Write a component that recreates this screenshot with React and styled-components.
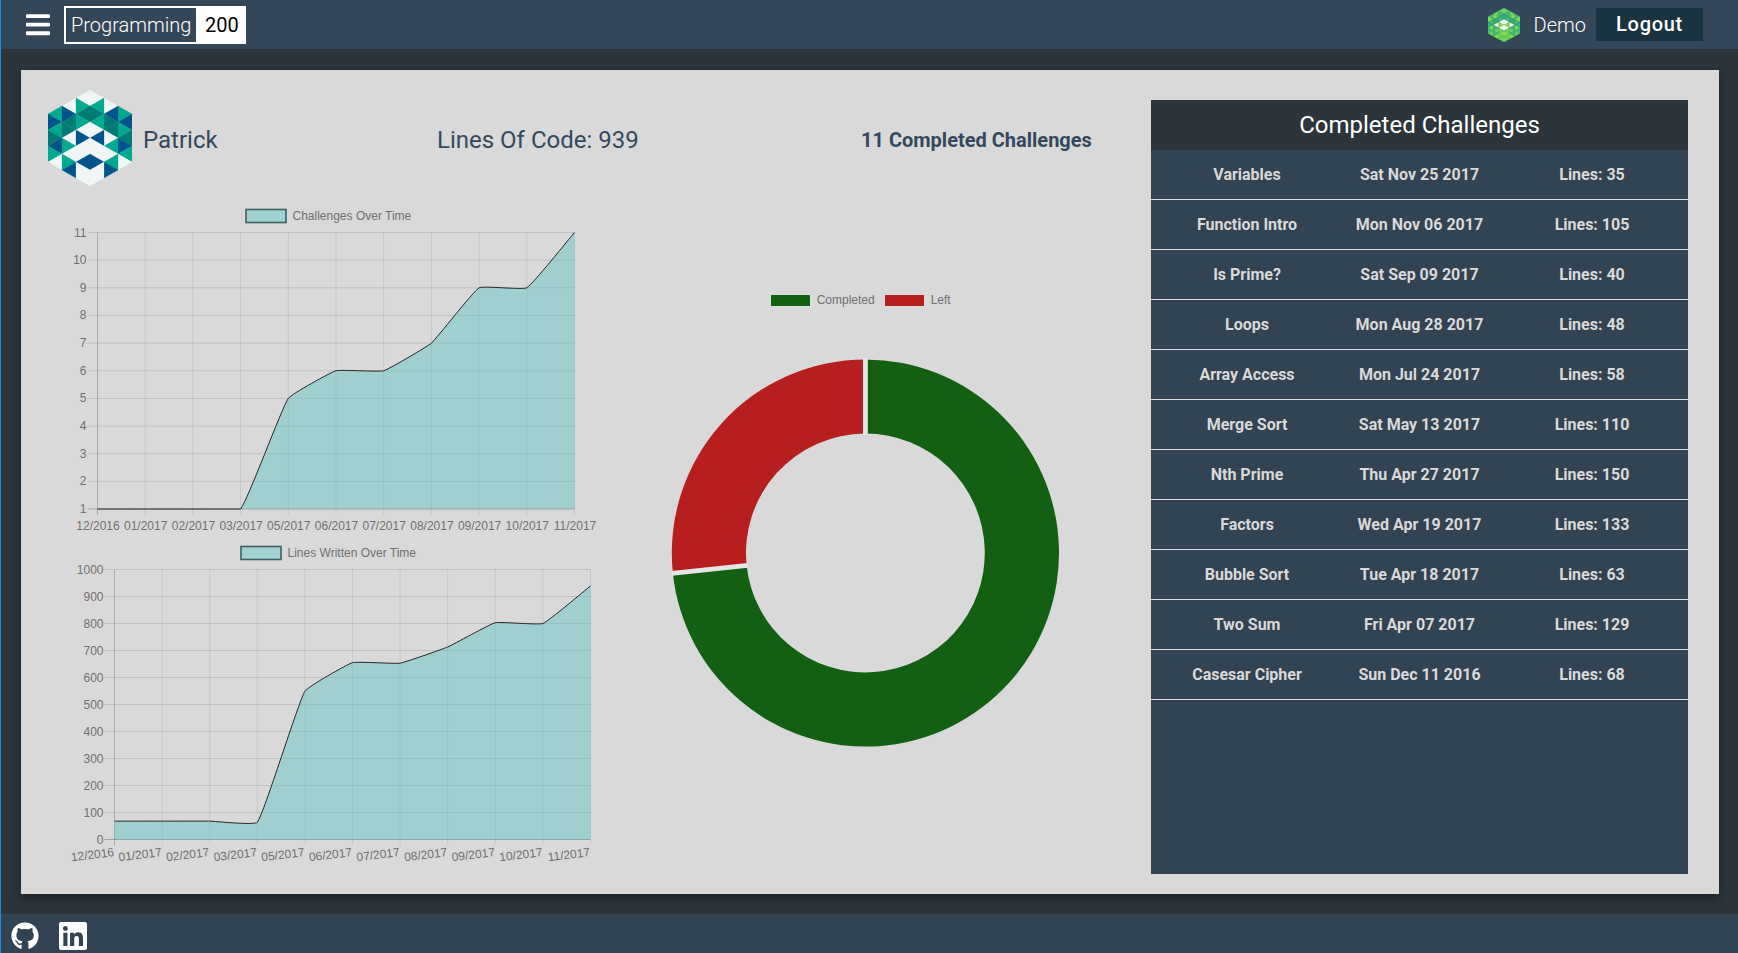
import React from "react";
import styled, { createGlobalStyle } from "styled-components";
import { FaBars, FaGithub, FaLinkedin } from "react-icons/fa";

const Global = createGlobalStyle`
  html, body { margin: 0; padding: 0; height: 100%; }
  body { font-family: Roboto, "Liberation Sans", sans-serif; background: #2b353b; }
  * { box-sizing: border-box; }
`;

const Page = styled.div`
  width: 1738px;
  height: 953px;
  display: flex;
  flex-direction: column;
  border-left: 1px solid #1e88e5;
  background: #2b353b;
  overflow: hidden;
`;

const TopBar = styled.header`
  height: 49px;
  flex: none;
  display: flex;
  align-items: center;
  padding: 0 35px 0 25px;
  background: #344758;
  color: #fff;
`;

const MenuButton = styled.div`
  display: flex;
  width: 24px;
  margin-right: 14px;
  color: #fff;
`;

const Badge = styled.div`
  display: flex;
  height: 38px;
  border: 2px solid #fff;
  background: #fff;
  font-size: 20px;
  font-weight: 300;
`;

const BadgeName = styled.div`
  display: flex;
  align-items: center;
  width: 130px;
  padding-left: 5px;
  background: #344758;
  color: #fff;
`;

const BadgeScore = styled.div`
  display: flex;
  align-items: center;
  width: 48px;
  padding-left: 9px;
  color: #000;
  font-weight: 400;
`;

const TopRight = styled.div`
  margin-left: auto;
  display: flex;
  align-items: center;
`;

const UserName = styled.span`
  margin: 0 10px 0 14px;
  font-size: 20px;
  font-weight: 300;
  color: #fff;
`;

const LogoutButton = styled.button`
  width: 107px;
  height: 33px;
  border: 0;
  padding: 0 0 1px;
  background: #1a3341;
  color: #fff;
  font-family: Roboto, sans-serif;
  font-size: 20px;
  font-weight: 500;
  letter-spacing: 0.7px;
`;

const Main = styled.main`
  flex: 1;
  min-height: 0;
  padding: 21px 19px 20px 20px;
  display: flex;
`;

const Panel = styled.section`
  flex: 1;
  display: flex;
  padding: 20px 30px 20px 27px;
  background: #d9d9d9;
  box-shadow: 0 4px 10px rgba(0, 0, 0, 0.35);
`;

const Dashboard = styled.div`
  width: 1103px;
  flex: none;
`;

const ProfileRow = styled.div`
  display: flex;
  align-items: center;
  height: 96px;
  color: #34495e;
`;

const ProfileCell = styled.div`
  width: 389px;
  display: flex;
  align-items: center;
  gap: 11px;
  font-size: 24px;
  font-weight: 400;
`;

const ProfileName = styled.span`
  padding-top: 4px;
`;

const LinesCell = styled.div`
  width: 424px;
  padding-top: 3px;
  font-size: 24px;
  font-weight: 400;
`;

const CountCell = styled.div`
  padding-top: 3px;
  font-size: 20px;
  font-weight: 700;
`;

const ChartsRow = styled.div`
  display: flex;
  margin-top: 14px;
`;

const ChartColumn = styled.div`
  width: 612px;
  flex: none;
  display: flex;
  flex-direction: column;
`;

const ChartSvg = styled.svg`
  display: block;
  overflow: visible;
`;

const DonutSvg = styled.svg`
  display: block;
  margin-top: 80px;
`;

const ChartText = styled.text`
  font-family: "Liberation Sans", Arial, sans-serif;
  font-size: 12px;
  fill: #707070;
`;

const Board = styled.aside`
  width: 537px;
  height: 774px;
  margin-top: 10px;
  flex: none;
  background: #324353;
`;

const BoardTitle = styled.h2`
  margin: 0;
  height: 50px;
  display: flex;
  align-items: center;
  justify-content: center;
  background: #2b353b;
  color: #fff;
  font-size: 24px;
  font-weight: 400;
`;

const BoardRow = styled.div`
  display: grid;
  grid-template-columns: 192px 153px 192px;
  height: 50px;
  align-items: center;
  justify-items: center;
  border-bottom: 1px solid #d9d9d9;
  color: #d9d9d9;
  font-size: 16px;
  font-weight: 700;
  white-space: nowrap;
`;

const BottomBar = styled.footer`
  height: 39px;
  flex: none;
  display: flex;
  align-items: center;
  gap: 18px;
  padding: 4px 0 0 10px;
  background: #324353;
  color: #fff;
`;

const LABELS = ["12/2016", "01/2017", "02/2017", "03/2017", "05/2017", "06/2017", "07/2017", "08/2017", "09/2017", "10/2017", "11/2017"];

function spline(pts, tension, top, bottom) {
  const cap = (y) => Math.min(bottom, Math.max(top, y));
  let d = `M${pts[0][0]} ${pts[0][1]}`;
  const ctrl = pts.map((p, i) => {
    const a = pts[i - 1] || p;
    const b = pts[i + 1] || p;
    const d1 = Math.hypot(p[0] - a[0], p[1] - a[1]);
    const d2 = Math.hypot(b[0] - p[0], b[1] - p[1]);
    const sum = d1 + d2 || 1;
    const fa = (tension * d1) / sum;
    const fb = (tension * d2) / sum;
    return {
      prev: [p[0] - fa * (b[0] - a[0]), cap(p[1] - fa * (b[1] - a[1]))],
      next: [p[0] + fb * (b[0] - a[0]), cap(p[1] + fb * (b[1] - a[1]))],
    };
  });
  for (let i = 1; i < pts.length; i++) {
    d += `C${ctrl[i - 1].next.join(" ")} ${ctrl[i].prev.join(" ")} ${pts[i].join(" ")}`;
  }
  return d;
}

function LineChart({ view, plot, min, max, step, values, legend, legendBox, legendX, rotated }) {
  const { left, right, top, bottom } = plot;
  const xAt = (i) => left + ((right - left) * i) / (values.length - 1);
  const yAt = (v) => bottom - ((bottom - top) * (v - min)) / (max - min);
  const ticks = [];
  for (let v = min; v <= max; v += step) ticks.push(v);
  const pts = values.map((v, i) => [xAt(i), yAt(v)]);
  const line = spline(pts, 0.1, top, bottom);
  const [, , vw, vh] = view;
  return (
    <ChartSvg width={vw} height={vh} viewBox={view.join(" ")}>
      <rect x={legendBox.x} y={legendBox.y} width={legendBox.w} height={legendBox.h} fill="#a0d2d2" stroke="#3f5f5f" strokeWidth="1.6" />
      <ChartText x={legendX} y={legendBox.y + legendBox.h / 2 + 4}>{legend}</ChartText>
      {ticks.map((v) => (
        <g key={v}>
          <line x1={left - 10} x2={right} y1={yAt(v)} y2={yAt(v)} stroke={v === min ? "rgba(0,0,0,0.26)" : "rgba(0,0,0,0.11)"} />
          <ChartText x={left - 11} y={yAt(v) + 4} textAnchor="end">{v}</ChartText>
        </g>
      ))}
      {values.map((_, i) => (
        <line key={i} x1={xAt(i)} x2={xAt(i)} y1={top} y2={bottom + 6} stroke={i === 0 ? "rgba(0,0,0,0.2)" : "rgba(0,0,0,0.08)"} />
      ))}
      <path d={`${line}L${right} ${bottom}L${left} ${bottom}Z`} fill="rgba(75,192,192,0.4)" />
      <path d={line} fill="none" stroke="#262626" strokeWidth="1" />
      {LABELS.map((l, i) =>
        rotated ? (
          <ChartText key={l} textAnchor="end" transform={`translate(${xAt(i)} ${bottom + 16.5}) rotate(-7)`}>{l}</ChartText>
        ) : (
          <ChartText key={l} x={xAt(i) + 0.5} y={bottom + 21} textAnchor="middle">{l}</ChartText>
        )
      )}
    </ChartSvg>
  );
}

const CX = 865.4;
const CY = 553;
const R = 193.6;
const RI = 119.4;

const polar = (r, deg) => {
  const a = (deg * Math.PI) / 180;
  return [CX + r * Math.sin(a), CY - r * Math.cos(a)];
};

const sector = (from, to) => {
  const large = to - from > 180 ? 1 : 0;
  const [x1, y1] = polar(R, from);
  const [x2, y2] = polar(R, to);
  const [x3, y3] = polar(RI, to);
  const [x4, y4] = polar(RI, from);
  return `M${x1} ${y1}A${R} ${R} 0 ${large} 1 ${x2} ${y2}L${x3} ${y3}A${RI} ${RI} 0 ${large} 0 ${x4} ${y4}Z`;
};

function Donut() {
  const seams = [0, 264].map((deg) => {
    const a = polar(RI - 1, deg);
    const b = polar(R + 1, deg);
    return <line key={deg} x1={a[0]} y1={a[1]} x2={b[0]} y2={b[1]} stroke="#e6e6e6" strokeWidth="4.8" />;
  });
  return (
    <DonutSvg width="415" height="490" viewBox="660 280 415 490">
      <rect x="770.5" y="294.5" width="40" height="12" fill="#136012" stroke="#d9e2d9" />
      <ChartText x="816.7" y="304">Completed</ChartText>
      <rect x="884.5" y="294.5" width="40" height="12" fill="#b71e1e" stroke="#e2d9d9" />
      <ChartText x="930.7" y="304">Left</ChartText>
      <path d={sector(0, 264)} fill="#136012" />
      <path d={sector(264, 360)} fill="#b71e1e" />
      {seams}
    </DonutSvg>
  );
}

/* Triangle grid of the hexagon logo: columns from the left edge to the centre,
   each listed top to bottom; the right half mirrors it. */
const LOGO_COLUMNS = ["GBGTBGW", "WBTTXGWGB", "WGTGXBXWBWW"];

const buildLogo = () => {
  const list = [];
  const x = (k) => 48 + 14 * k;
  const mirror = (px) => 180 - px;
  const add = (k1, k2, y1, ch) => {
    const pts = [[x(k1), y1], [x(k1), y1 + 16], [x(k2), y1 + 8]];
    list.push({ pts, ch });
    list.push({ pts: pts.map(([a, b]) => [mirror(a), b]), ch });
  };
  LOGO_COLUMNS.forEach((chars, kLo) => {
    const kHi = kLo + 1;
    const startHi = 90 + 8 * (3 - kHi);
    for (let i = 0; i < chars.length; i++) {
      const n = Math.floor(i / 2);
      if (i % 2 === 0) add(kHi, kLo, startHi + 16 * n, chars[i]);
      else add(kLo, kHi, startHi + 8 + 16 * n, chars[i]);
    }
  });
  return list;
};

const TRIANGLES = buildLogo();

const TEAL_PALETTE = { W: "#f0f5f5", X: "#f0f5f5", G: "#00a98f", B: "#00548b", T: "#007a74" };
const GREEN_PALETTE = { W: "#6ad45c", X: "#eef9e8", G: "#3dbb7d", B: "#83dc4c", T: "#35ad72" };

function HexLogo({ palette, width, height }) {
  return (
    <svg width={width} height={height} viewBox="48 90 84 96" preserveAspectRatio="none">
      {TRIANGLES.map((t, i) => (
        <polygon key={i} points={t.pts.map((p) => p.join(",")).join(" ")} fill={palette[t.ch]} stroke={palette[t.ch]} strokeWidth="0.25" />
      ))}
    </svg>
  );
}

const CHALLENGES = [
  ["Variables", "Sat Nov 25 2017", "Lines: 35"],
  ["Function Intro", "Mon Nov 06 2017", "Lines: 105"],
  ["Is Prime?", "Sat Sep 09 2017", "Lines: 40"],
  ["Loops", "Mon Aug 28 2017", "Lines: 48"],
  ["Array Access", "Mon Jul 24 2017", "Lines: 58"],
  ["Merge Sort", "Sat May 13 2017", "Lines: 110"],
  ["Nth Prime", "Thu Apr 27 2017", "Lines: 150"],
  ["Factors", "Wed Apr 19 2017", "Lines: 133"],
  ["Bubble Sort", "Tue Apr 18 2017", "Lines: 63"],
  ["Two Sum", "Fri Apr 07 2017", "Lines: 129"],
  ["Casesar Cipher", "Sun Dec 11 2016", "Lines: 68"],
];

export default function App() {
  return (
    <Page>
      <Global />
      <TopBar>
        <MenuButton><FaBars size={27.4} /></MenuButton>
        <Badge>
          <BadgeName>Programming</BadgeName>
          <BadgeScore>200</BadgeScore>
        </Badge>
        <TopRight>
          <HexLogo palette={GREEN_PALETTE} width={32} height={34} />
          <UserName>Demo</UserName>
          <LogoutButton>Logout</LogoutButton>
        </TopRight>
      </TopBar>
      <Main>
        <Panel>
          <Dashboard>
            <ProfileRow>
              <ProfileCell>
                <HexLogo palette={TEAL_PALETTE} width={84} height={96} />
                <ProfileName>Patrick</ProfileName>
              </ProfileCell>
              <LinesCell>Lines Of Code: 939</LinesCell>
              <CountCell>11 Completed Challenges</CountCell>
            </ProfileRow>
            <ChartsRow>
              <ChartColumn>
                <LineChart
                  view={[48, 200, 612, 335]}
                  plot={{ left: 97.5, right: 574.5, top: 232.5, bottom: 509 }}
                  min={1}
                  max={11}
                  step={1}
                  values={[1, 1, 1, 1, 5, 6, 6, 7, 9, 9, 11]}
                  legend="Challenges Over Time"
                  legendBox={{ x: 246, y: 209.5, w: 40, h: 13 }}
                  legendX={292.5}
                />
                <LineChart
                  view={[48, 535, 612, 340]}
                  plot={{ left: 114.5, right: 590.5, top: 569.5, bottom: 839.5 }}
                  min={0}
                  max={1000}
                  step={100}
                  values={[68, 68, 68, 64, 549, 655, 653, 713, 803, 800, 939]}
                  legend="Lines Written Over Time"
                  legendBox={{ x: 241, y: 546.5, w: 40, h: 13 }}
                  legendX={287.5}
                  rotated
                />
              </ChartColumn>
              <Donut />
            </ChartsRow>
          </Dashboard>
          <Board>
            <BoardTitle>Completed Challenges</BoardTitle>
            {CHALLENGES.map(([name, date, lines]) => (
              <BoardRow key={name}>
                <span>{name}</span>
                <span>{date}</span>
                <span>{lines}</span>
              </BoardRow>
            ))}
          </Board>
        </Panel>
      </Main>
      <BottomBar>
        <FaGithub size={28} />
        <FaLinkedin size={32} />
      </BottomBar>
    </Page>
  );
}
